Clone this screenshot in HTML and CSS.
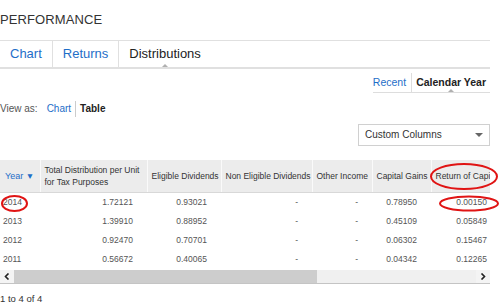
FILE: index.html
```html
<!DOCTYPE html>
<html>
<head>
    <title>Performance</title>
    <link rel="stylesheet" href="styles.css">
</head>
<body>
<div class="page">
    <h1>PERFORMANCE</h1>

    <ul class="tabs">
        <li><a href="#">Chart</a></li>
        <li><a href="#">Returns</a></li>
        <li class="active">Distributions</li>
    </ul>

    <div class="period">
        <a href="#">Recent</a>
        <span class="active">Calendar Year</span>
    </div>

    <div class="view-as">
        <span class="label">View as:</span>
        <a href="#">Chart</a>
        <b>Table</b>
    </div>

    <div class="toolbar">
        <div class="select">Custom Columns <span class="caret"></span></div>
    </div>

    <div class="table-wrap">
        <table>
            <!-- header widths follow the original grid -->
            <colgroup>
                <col style="width: 40px">
                <col style="width: 107px">
                <col style="width: 74px">
                <col style="width: 91px">
                <col style="width: 60px">
                <col style="width: 59px">
                <col style="width: 100px">
            </colgroup>
            <tr>
                <th class="sort">Year <span class="arrow">&#9660;</span></th>
                <th>Total Distribution per Unit<br>for Tax Purposes</th>
                <th>Eligible Dividends</th>
                <th>Non Eligible Dividends</th>
                <th>Other Income</th>
                <th>Capital Gains</th>
                <th>Return of Capital</th>
            </tr>
            <tr>
                <td>2014</td><td>1.72121</td><td>0.93021</td><td>-</td><td>-</td><td>0.78950</td><td class="last">0.00150</td>
            </tr>
            <tr>
                <td>2013</td><td>1.39910</td><td>0.88952</td><td>-</td><td>-</td><td>0.45109</td><td class="last">0.05849</td>
            </tr>
            <tr>
                <td>2012</td><td>0.92470</td><td>0.70701</td><td>-</td><td>-</td><td>0.06302</td><td class="last">0.15467</td>
            </tr>
            <tr>
                <td>2011</td><td>0.56672</td><td>0.40065</td><td>-</td><td>-</td><td>0.04342</td><td class="last">0.12265</td>
            </tr>
        </table>
    </div>

    <div class="scrollbar">
        <span class="btn">
            <svg width="6" height="7" viewBox="0 0 6 7"><polyline points="4.5,0.5 1.5,3.5 4.5,6.5" fill="none" stroke="#222" stroke-width="1.6"/></svg>
        </span>
        <span class="thumb"></span>
        <span class="track"></span>
        <span class="btn">
            <svg width="6" height="7" viewBox="0 0 6 7"><polyline points="1.5,0.5 4.5,3.5 1.5,6.5" fill="none" stroke="#222" stroke-width="1.6"/></svg>
        </span>
    </div>

    <div class="count">1 to 4 of 4</div>

    <!-- hand drawn highlight marks over the table -->
    <svg class="marks" width="500" height="307">
        <ellipse cx="14.5" cy="203.5" rx="12.5" ry="7.5"/>
        <ellipse cx="464" cy="176.5" rx="33" ry="12.5"/>
        <ellipse cx="469" cy="203.5" rx="29" ry="7"/>
    </svg>
</div>
</body>
</html>
```

FILE: styles.css
```css
body {
    margin: 0;
    font-family: "Liberation Sans", Arial, sans-serif;
    color: #333;
}

a {
    color: #1e6ec8;
    text-decoration: none;
}

.page {
    position: relative;
    width: 490px;
    height: 307px;
}

h1 {
    margin: 0;
    padding-top: 12px;
    font-size: 13px;
    font-weight: normal;
    line-height: 16px;
    color: #333;
    letter-spacing: 0.1px;
}

.tabs {
    display: flex;
    list-style: none;
    margin: 12px 0 0;
    padding: 0;
    border-top: 1px solid #e0e0e0;
    border-bottom: 2px solid #e0e0e0;
}

.tabs li {
    position: relative;
    padding: 0 10px;
    font-size: 13px;
    line-height: 26px;
    border-right: 1px solid #e0e0e0;
}

.tabs li.active {
    border-right: none;
    color: #222;
}

.tabs li.active::after,
.period .active::after {
    content: "";
    position: absolute;
    left: 50%;
    bottom: 0;
    margin-left: -3px;
    border-left: 3px solid transparent;
    border-right: 3px solid transparent;
    border-bottom: 3px solid #b0b0b0;
}

.period {
    display: flex;
    width: max-content;
    margin: 4px 0 0 auto;
    border-bottom: 1px solid #ddd;
    font-size: 10.5px;
    line-height: 19px;
}

.period a {
    padding-right: 5px;
    border-right: 1px solid #ddd;
}

.period .active {
    position: relative;
    padding: 0 4px;
    font-weight: bold;
    color: #222;
}

.view-as {
    display: flex;
    margin-top: 8px;
    font-size: 10px;
    line-height: 16px;
    color: #555;
}

.view-as .label {
    margin-right: 9px;
}

.view-as a {
    padding-right: 4px;
    border-right: 1px solid #ccc;
}

.view-as b {
    padding-left: 4px;
    color: #222;
}

.toolbar {
    display: flex;
    justify-content: flex-end;
    margin-top: 7px;
}

.select {
    position: relative;
    box-sizing: border-box;
    width: 132px;
    height: 22px;
    padding: 0 6px;
    border: 1px solid #d0d0d0;
    font-size: 10px;
    line-height: 20px;
    color: #333;
}

.caret {
    position: absolute;
    right: 6px;
    top: 8px;
    border-left: 4px solid transparent;
    border-right: 4px solid transparent;
    border-top: 4px solid #666;
}

.table-wrap {
    width: 490px;
    margin-top: 14px;
    overflow: hidden;
}

table {
    width: 531px;
    table-layout: fixed;
    border-collapse: collapse;
    font-size: 8.5px;
}

th {
    height: 32px;
    padding: 0 3px 0 4px;
    background-color: #ececec;
    border-left: 1px solid #fafafa;
    border-bottom: 1px solid #d8d8d8;
    text-align: left;
    font-weight: normal;
    line-height: 12px;
    color: #333;
    vertical-align: middle;
    white-space: nowrap;
    overflow: hidden;
}

th:first-child {
    border-left: none;
}

th.sort {
    padding-left: 5px;
    font-size: 9px;
    color: #1e6ec8;
}

th.sort .arrow {
    font-size: 8.5px;
}

td {
    height: 19px;
    padding: 0 14px 0 0;
    text-align: right;
    line-height: 19px;
    color: #555;
}

td:first-child {
    padding: 0 0 0 3px;
    text-align: left;
}

td.last {
    padding-right: 44px;
}

.scrollbar {
    display: flex;
    height: 13px;
    margin-top: 1px;
    border-bottom: 1px solid #c4c4c4;
    background-color: #f1f1f1;
}

.scrollbar .btn {
    display: flex;
    align-items: center;
    justify-content: center;
    width: 14px;
    background-color: #f4f4f4;
}

.scrollbar .thumb {
    width: 303px;
    background-color: #cdcdcd;
}

.scrollbar .track {
    flex: 1;
    background-color: #f0f0f0;
}

.count {
    margin-top: 8px;
    font-size: 9.5px;
    line-height: 14px;
    color: #333;
}

.marks {
    position: absolute;
    left: 0;
    top: 0;
    pointer-events: none;
}

.marks ellipse {
    fill: none;
    stroke: #e01414;
    stroke-width: 2;
}
```
